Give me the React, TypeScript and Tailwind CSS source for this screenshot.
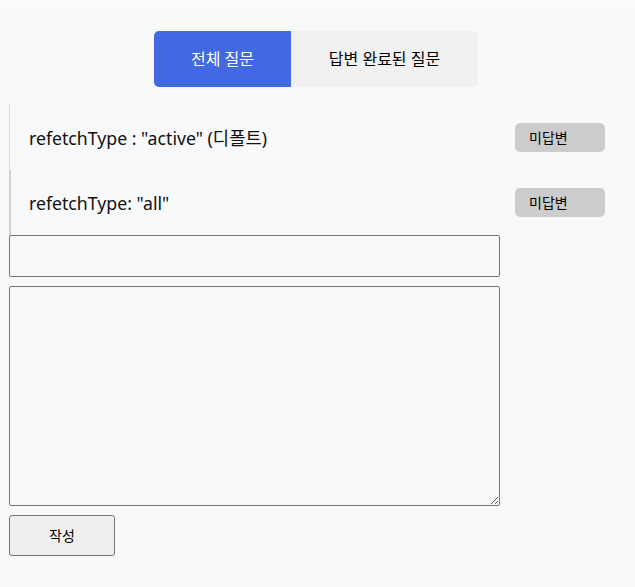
import React from "react";

const font = { fontFamily: '"Noto Sans", "Noto Sans CJK KR", sans-serif' };

function Item({ text, top }: { text: string; top?: boolean }) {
  return (
    <div
      className={
        "flex items-center ml-[9px] w-[596px] justify-between " +
        (top ? "h-[66px] border-l border-[#d9d9d9]" : "h-[65px] border-l-2 border-[#d0d0d0]")
      }
    >
      <span className={"text-[17.7px] text-[#111] " + (top ? "pl-[19px] pt-[3px]" : "pl-[18px] pt-[1px]")}>{text}</span>
      <span className="w-[90px] h-[29px] bg-[#cccccc] rounded-[5px] text-[14px] text-black flex items-center pl-[14px]">
        미답변
      </span>
    </div>
  );
}

export default function App() {
  return (
    <div className="w-[635px] h-[587px] bg-[#f8f9fa] overflow-hidden" style={font}>
      <div className="h-[9px] bg-[#fafbfc]" />
      <div className="flex pl-[154px] pt-[22px]">
        <div className="flex h-[56px] rounded-[5px] overflow-hidden">
          <button className="w-[137px] bg-[#4169e1] text-white text-[16px]">전체 질문</button>
          <button className="w-[187px] bg-[#f0f0f0] text-black text-[16px]">답변 완료된 질문</button>
        </div>
      </div>
      <div className="mt-[17px]">
        <Item text={'refetchType : "active" (디폴트)'} top />
        <Item text={'refetchType: "all"'} />
      </div>
      <div className="ml-[9px] flex flex-col">
        <input className="w-[491px] h-[42px] border border-[#767676] rounded-[2px] bg-[#f8f9fa] outline-none" />
        <textarea className="mt-[9px] w-[491px] h-[220px] border border-[#767676] rounded-[2px] bg-[#f8f9fa] outline-none" />
        <button className="mt-[9px] w-[106px] h-[41px] bg-[#efefef] border border-[#767676] rounded-[3px] text-[14px] text-black">
          작성
        </button>
      </div>
    </div>
  );
}
